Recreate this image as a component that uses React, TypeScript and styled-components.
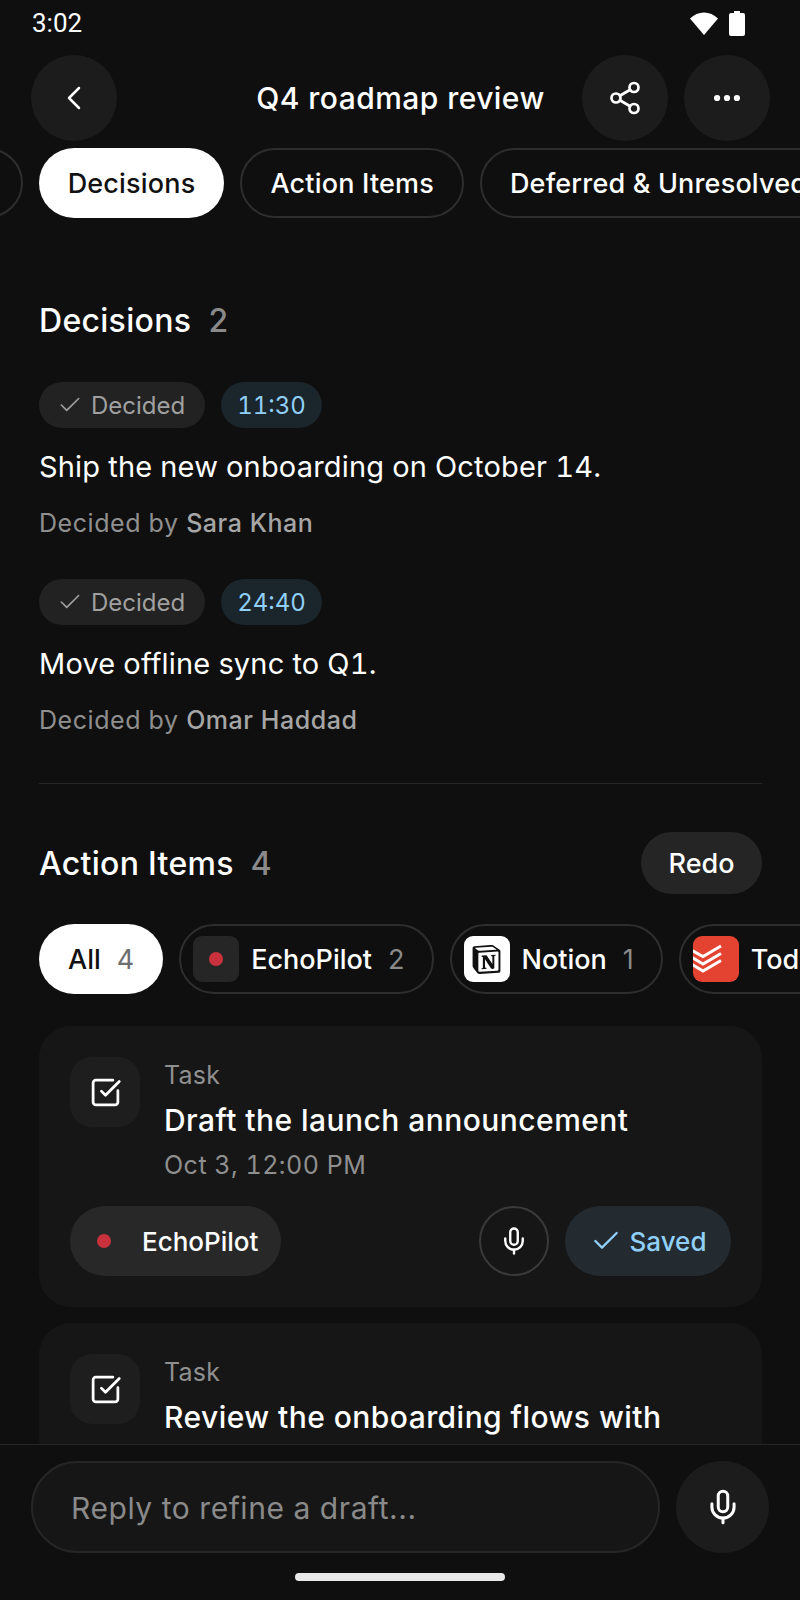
import styled, { createGlobalStyle } from "styled-components";
import { Check, ChevronLeft, Ellipsis, Mic, Share2, SquareCheckBig } from "lucide-react";
import { SiNotion } from "react-icons/si";

const GlobalStyle = createGlobalStyle`
  html, body {
    margin: 0;
    padding: 0;
    background: #0f0f0f;
  }
  * {
    box-sizing: border-box;
  }
`;

interface Task {
  title: string;
  date?: string;
}

const decisions = [
  { time: "11:30", text: "Ship the new onboarding on October 14.", by: "Sara Khan" },
  { time: "24:40", text: "Move offline sync to Q1.", by: "Omar Haddad" },
];

export default function App() {
  return (
    <Screen>
      <GlobalStyle />
      <StatusBar>
        <Clock>3:02</Clock>
        <StatusIcons>
          <svg width="30" height="24" viewBox="0 0 30 24">
            <path d="M1 7.5C5 3.5 9.8 1.5 15 1.5s10 2 14 6L15 24 1 7.5Z" fill="#fff" />
          </svg>
          <svg width="16" height="25" viewBox="0 0 16 25">
            <path
              d="M5 0h6v2h3a2 2 0 0 1 2 2v19a2 2 0 0 1-2 2H2a2 2 0 0 1-2-2V4a2 2 0 0 1 2-2h3V0Z"
              fill="#fff"
            />
          </svg>
        </StatusIcons>
      </StatusBar>

      <Header>
        <HeaderSide>
          <RoundButton>
            <ChevronLeft size={40} strokeWidth={1.5} />
          </RoundButton>
        </HeaderSide>
        <HeaderTitle>Q4 roadmap review</HeaderTitle>
        <HeaderSide $right>
          <RoundButton>
            <Share2 size={36} strokeWidth={1.8} />
          </RoundButton>
          <RoundButton>
            <Ellipsis size={34} strokeWidth={2.4} />
          </RoundButton>
        </HeaderSide>
      </Header>

      <Tabs>
        <Tab $first>Summary</Tab>
        <Tab $active>Decisions</Tab>
        <Tab>Action Items</Tab>
        <Tab>Deferred &amp; Unresolved</Tab>
      </Tabs>

      <Content>
        <SectionHead>
          <SectionTitle>
            Decisions <Count>2</Count>
          </SectionTitle>
        </SectionHead>

        <DecisionList>
          {decisions.map((d) => (
            <Decision key={d.time}>
              <BadgeRow>
                <Badge>
                  <Check size={26} strokeWidth={1.5} />
                  Decided
                </Badge>
                <TimeBadge>{d.time}</TimeBadge>
              </BadgeRow>
              <DecisionText>{d.text}</DecisionText>
              <DecidedBy>
                Decided by <strong>{d.by}</strong>
              </DecidedBy>
            </Decision>
          ))}
        </DecisionList>

        <Divider />

        <ActionHead>
          <SectionTitle>
            Action Items <Count>4</Count>
          </SectionTitle>
          <RedoButton>Redo</RedoButton>
        </ActionHead>

        <Filters>
          <Filter $active>
            All <FilterCount $active>4</FilterCount>
          </Filter>
          <Filter>
            <LogoBox $bg="#262626">
              <RedDot />
            </LogoBox>
            EchoPilot <FilterCount>2</FilterCount>
          </Filter>
          <Filter>
            <LogoBox $bg="#ffffff">
              <SiNotion size={29} color="#111" />
            </LogoBox>
            Notion <FilterCount>1</FilterCount>
          </Filter>
          <Filter>
            <LogoBox $bg="#e44332">
              <svg width="46" height="46" viewBox="0 0 46 46" fill="none" stroke="#fff" strokeWidth="3">
                <path d="M-1 14.5l11 6 18-10.5" />
                <path d="M-1 21.5l11 6.500 18-10.500" />
                <path d="M-1 28.500l11 6.500 18-10.500" />
              </svg>
            </LogoBox>
            Todoist <FilterCount>1</FilterCount>
          </Filter>
        </Filters>

        <Cards>
          <TaskCard title="Draft the launch announcement" date="Oct 3, 12:00 PM" />
          <TaskCard title="Review the onboarding flows with" />
        </Cards>
      </Content>

      <Footer>
        <InputRow>
          <ReplyBox>Reply to refine a draft...</ReplyBox>
          <FooterMic>
            <Mic size={38} strokeWidth={1.9} />
          </FooterMic>
        </InputRow>
        <HomeBar />
      </Footer>
    </Screen>
  );
}

function TaskCard({ title, date }: Task) {
  return (
    <Card>
      <CardTop>
        <TaskIcon>
          <SquareCheckBig size={33} strokeWidth={2} />
        </TaskIcon>
        <CardText>
          <TaskLabel>Task</TaskLabel>
          <TaskTitle>{title}</TaskTitle>
          {date && <TaskDate>{date}</TaskDate>}
        </CardText>
      </CardTop>
      {date && (
        <CardActions>
          <SourcePill>
            <RedDot />
            EchoPilot
          </SourcePill>
          <MicOutline>
            <Mic size={30} strokeWidth={1.9} />
          </MicOutline>
          <SavedPill>
            <Check size={32} strokeWidth={1.7} />
            Saved
          </SavedPill>
        </CardActions>
      )}
    </Card>
  );
}

const Screen = styled.div`
  width: 800px;
  height: 1600px;
  display: flex;
  flex-direction: column;
  overflow: hidden;
  background: #0f0f0f;
  color: #fff;
  font-family: Inter, "Liberation Sans", sans-serif;
`;

const StatusBar = styled.div`
  height: 48px;
  flex: none;
  display: flex;
  align-items: center;
  justify-content: space-between;
  padding: 0 55px 2px 32px;
`;

const Clock = styled.span`
  font-family: Roboto, sans-serif;
  font-size: 26px;
`;

const StatusIcons = styled.div`
  display: flex;
  align-items: center;
  gap: 10px;
`;

const Header = styled.div`
  flex: none;
  height: 92px;
  display: grid;
  grid-template-columns: 1fr auto 1fr;
  align-items: center;
  padding: 0 30px 0 31px;
  margin-top: 4px;
`;

const HeaderSide = styled.div<{ $right?: boolean }>`
  display: flex;
  gap: 16px;
  justify-content: ${(p) => (p.$right ? "flex-end" : "flex-start")};
`;

const RoundButton = styled.div`
  width: 86px;
  height: 86px;
  flex: none;
  border-radius: 50%;
  background: #1c1c1c;
  display: flex;
  align-items: center;
  justify-content: center;
  color: #fff;
`;

const HeaderTitle = styled.div`
  text-align: center;
  font-size: 30px;
  font-weight: 500;
  letter-spacing: 0.45px;
  white-space: nowrap;
`;

const Tabs = styled.div`
  flex: none;
  display: flex;
  gap: 16px;
  height: 70px;
  margin-top: 4px;
`;

const Tab = styled.div<{ $active?: boolean; $first?: boolean }>`
  flex: none;
  height: 70px;
  padding: 0 ${(p) => (p.$active ? "29px" : "28px")};
  border-radius: 35px;
  display: flex;
  align-items: center;
  font-size: 27px;
  font-weight: 500;
  letter-spacing: 0.18px;
  white-space: nowrap;
  margin-left: ${(p) => (p.$first ? "-162px" : "0")};
  color: ${(p) => (p.$active ? "#111" : "#fff")};
  background: ${(p) => (p.$active ? "#fff" : "transparent")};
  border: ${(p) => (p.$active ? "none" : "2px solid #2e2e2e")};
`;

const Content = styled.div`
  flex: 1;
  min-height: 0;
  overflow: hidden;
  padding: 78px 38px 0 39px;
  display: flex;
  flex-direction: column;
`;

const SectionHead = styled.div`
  height: 48px;
  flex: none;
  display: flex;
  align-items: center;
`;

const SectionTitle = styled.h2`
  margin: 0;
  font-size: 32px;
  font-weight: 500;
  letter-spacing: 0.3px;
`;

const Count = styled.span`
  color: #8a8a8a;
  margin-left: 8px;
  font-variant-numeric: tabular-nums;
`;

const DecisionList = styled.div`
  display: flex;
  flex-direction: column;
  gap: 38px;
  margin-top: 38px;
`;

const Decision = styled.div`
  display: flex;
  flex-direction: column;
`;

const BadgeRow = styled.div`
  display: flex;
  gap: 16px;
`;

const Badge = styled.div`
  height: 46px;
  padding: 0 20px 0 18px;
  border-radius: 23px;
  background: #222222;
  color: #a0a0a0;
  font-size: 24px;
  display: flex;
  align-items: center;
  gap: 8px;
`;

const TimeBadge = styled(Badge)`
  padding: 0 16px;
  background: #1b252c;
  color: #90d0f8;
  font-variant-numeric: tabular-nums;
`;

const DecisionText = styled.div`
  margin-top: 18px;
  height: 42px;
  line-height: 42px;
  font-size: 29px;
  letter-spacing: 0.18px;
  font-variant-numeric: tabular-nums;
`;

const DecidedBy = styled.div`
  margin-top: 17px;
  height: 36px;
  line-height: 36px;
  font-size: 25px;
  letter-spacing: 0.55px;
  color: #8f8f8f;

  strong {
    font-weight: 500;
    color: #a6a6a6;
  }
`;

const Divider = styled.div`
  flex: none;
  height: 1px;
  background: #262626;
  margin-top: 45px;
`;

const ActionHead = styled.div`
  flex: none;
  height: 62px;
  margin-top: 48px;
  display: flex;
  align-items: center;
  justify-content: space-between;
`;

const RedoButton = styled.div`
  width: 121px;
  height: 62px;
  border-radius: 31px;
  background: #252525;
  display: flex;
  align-items: center;
  justify-content: center;
  font-size: 27px;
  font-weight: 500;
`;

const Filters = styled.div`
  flex: none;
  display: flex;
  gap: 16px;
  height: 70px;
  margin: 30px -38px 0 0;
`;

const Filter = styled.div<{ $active?: boolean }>`
  flex: none;
  height: 70px;
  border-radius: 35px;
  padding: 0 ${(p) => (p.$active ? "29px" : "27px")} 0 ${(p) => (p.$active ? "29px" : "12px")};
  display: flex;
  align-items: center;
  gap: 12px;
  font-size: 27px;
  font-weight: 500;
  white-space: nowrap;
  color: ${(p) => (p.$active ? "#111" : "#fff")};
  background: ${(p) => (p.$active ? "#fff" : "transparent")};
  border: ${(p) => (p.$active ? "none" : "2px solid #2e2e2e")};
`;

const FilterCount = styled.span<{ $active?: boolean }>`
  color: ${(p) => (p.$active ? "#6e6e6e" : "#8a8a8a")};
  font-weight: 400;
  margin-left: 4px;
`;

const LogoBox = styled.div<{ $bg: string }>`
  width: 46px;
  height: 46px;
  flex: none;
  border-radius: 9px;
  overflow: hidden;
  background: ${(p) => p.$bg};
  display: flex;
  align-items: center;
  justify-content: center;
`;

const RedDot = styled.span`
  width: 14px;
  height: 14px;
  flex: none;
  border-radius: 50%;
  background: #c9323c;
`;

const Cards = styled.div`
  display: flex;
  flex-direction: column;
  gap: 16px;
  margin-top: 32px;
`;

const Card = styled.div`
  flex: none;
  border-radius: 32px;
  background: #161616;
  padding: 31px;
  display: flex;
  flex-direction: column;
  gap: 23px;
`;

const CardTop = styled.div`
  display: flex;
  gap: 24px;
`;

const TaskIcon = styled.div`
  width: 70px;
  height: 70px;
  flex: none;
  border-radius: 22px;
  background: #1e1e1e;
  display: flex;
  align-items: center;
  justify-content: center;
`;

const CardText = styled.div`
  display: flex;
  flex-direction: column;
  min-width: 0;
`;

const TaskLabel = styled.div`
  height: 36px;
  line-height: 36px;
  font-size: 25px;
  letter-spacing: 0.2px;
  color: #8f8f8f;
`;

const TaskTitle = styled.div`
  margin-top: 5px;
  height: 44px;
  line-height: 44px;
  font-size: 30px;
  font-weight: 500;
  letter-spacing: 0.45px;
  white-space: nowrap;
`;

const TaskDate = styled.div`
  margin-top: 5px;
  height: 36px;
  line-height: 36px;
  font-size: 25px;
  letter-spacing: 0.5px;
  color: #8f8f8f;
  font-variant-numeric: tabular-nums;
`;

const CardActions = styled.div`
  display: flex;
  align-items: center;
  gap: 16px;
`;

const SourcePill = styled.div`
  width: 211px;
  height: 70px;
  margin-right: auto;
  border-radius: 35px;
  background: #282828;
  display: flex;
  align-items: center;
  gap: 31px;
  padding-left: 27px;
  font-size: 26px;
  font-weight: 500;
`;

const MicOutline = styled.div`
  width: 70px;
  height: 70px;
  flex: none;
  border-radius: 50%;
  border: 2px solid #3a3a3a;
  display: flex;
  align-items: center;
  justify-content: center;
`;

const SavedPill = styled.div`
  width: 166px;
  height: 70px;
  border-radius: 35px;
  background: #232a30;
  color: #90d0f8;
  display: flex;
  align-items: center;
  justify-content: center;
  gap: 8px;
  font-size: 26px;
  font-weight: 500;
`;

const Footer = styled.div`
  flex: none;
  height: 156px;
  background: #0f0f0f;
  border-top: 1px solid #262626;
  padding: 16px 31px 0 31px;
  display: flex;
  flex-direction: column;
  align-items: center;
`;

const InputRow = styled.div`
  width: 100%;
  display: flex;
  gap: 16px;
`;

const ReplyBox = styled.div`
  flex: 1;
  height: 92px;
  border-radius: 46px;
  border: 2px solid #262626;
  background: #161616;
  display: flex;
  align-items: center;
  padding: 2px 0 0 38px;
  font-size: 30px;
  letter-spacing: 0.55px;
  color: #8a8a8a;
`;

const FooterMic = styled.div`
  width: 93px;
  height: 92px;
  flex: none;
  border-radius: 50%;
  background: #1c1c1c;
  display: flex;
  align-items: center;
  justify-content: center;
`;

const HomeBar = styled.div`
  width: 210px;
  height: 8px;
  margin-top: 20px;
  border-radius: 4px;
  background: #e8e8e8;
`;
